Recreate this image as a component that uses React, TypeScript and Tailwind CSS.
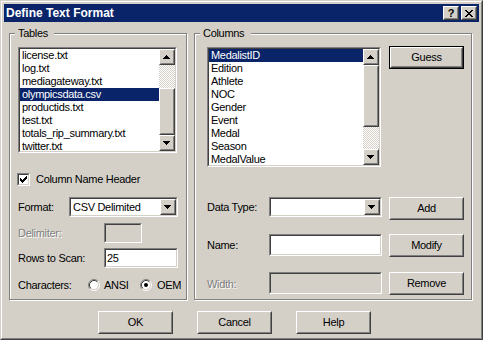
import React from "react";

type Kids = { className?: string; innerClass?: string; children?: React.ReactNode };

function Sunken({ className = "", innerClass = "", children }: Kids) {
  return (
    <div className={"border border-t-[#808080] border-l-[#808080] border-r-white border-b-white " + className}>
      <div className={"h-full w-full border border-t-[#404040] border-l-[#404040] border-r-[#d4d0c8] border-b-[#d4d0c8] " + innerClass}>
        {children}
      </div>
    </div>
  );
}

function Raised({ className = "", innerClass = "", children }: Kids) {
  return (
    <div className={"border border-t-white border-l-white border-r-[#404040] border-b-[#404040] bg-[#d4d0c8] " + className}>
      <div className={"h-full w-full border border-t-[#d4d0c8] border-l-[#d4d0c8] border-r-[#808080] border-b-[#808080] " + innerClass}>
        {children}
      </div>
    </div>
  );
}

function Pixels({ rows, color = "#000" }: { rows: string[]; color?: string }) {
  const w = rows[0].length;
  const h = rows.length;
  const rects: React.ReactNode[] = [];
  rows.forEach((r, y) =>
    r.split("").forEach((c, x) => {
      if (c === "x") rects.push(<rect key={x + "-" + y} x={x} y={y} width={1} height={1} fill={color} />);
    })
  );
  return (
    <svg width={w} height={h} viewBox={`0 0 ${w} ${h}`} shapeRendering="crispEdges">
      {rects}
    </svg>
  );
}

const DOWN = ["xxxxxxx", ".xxxxx.", "..xxx..", "...x..."];
const UP = ["...x...", "..xxx..", ".xxxxx.", "xxxxxxx"];
const CLOSE = ["xx....xx", ".xx..xx.", "..xxxx..", "...xx...", "..xxxx..", ".xx..xx.", "xx....xx"];
const CHECK = ["......x", ".....xx", "x...xxx", "xx.xxx.", "xxxxx..", ".xxx...", "..x...."];

function ArrowBtn({ dir }: { dir: "up" | "down" }) {
  return (
    <Raised className="w-[16px] h-[16px] shrink-0" innerClass="flex items-center justify-center pr-[1px]">
      <Pixels rows={dir === "up" ? UP : DOWN} />
    </Raised>
  );
}

function Track({ className = "" }: { className?: string }) {
  return (
    <div
      className={
        "w-full bg-[image:repeating-conic-gradient(#ffffff_0%_25%,#d4d0c8_0%_50%)] bg-[length:2px_2px] " + className
      }
    />
  );
}

function Button({ label, isDefault = false }: { label: string; isDefault?: boolean }) {
  if (isDefault)
    return (
      <div className="w-[75px] h-[23px] border border-black">
        <Raised className="h-full w-full" innerClass="flex items-center justify-center">
          {label}
        </Raised>
      </div>
    );
  return (
    <Raised className="w-[75px] h-[23px]" innerClass="flex items-center justify-center">
      {label}
    </Raised>
  );
}

function ListBox({
  items,
  selected,
  className,
  scroll,
}: {
  items: string[];
  selected: string;
  className: string;
  scroll: React.ReactNode;
}) {
  return (
    <Sunken className={className} innerClass="bg-white flex overflow-hidden">
      <div className="flex-1 overflow-hidden">
        {items.map((it) => (
          <div
            key={it}
            className={
              "h-[13px] leading-[13px] pl-[2px] whitespace-nowrap " +
              (it === selected ? "bg-[#0a246a] text-white" : "text-black")
            }
          >
            {it}
          </div>
        ))}
      </div>
      <div className="w-[16px] h-full flex flex-col">{scroll}</div>
    </Sunken>
  );
}

function Combo({ value, className }: { value: string; className: string }) {
  return (
    <Sunken className={className} innerClass="bg-white flex">
      <div className="flex-1 pl-[2px] flex items-center">{value}</div>
      <ArrowBtn dir="down" />
    </Sunken>
  );
}

function Radio({ checked }: { checked: boolean }) {
  return (
    <svg width="12" height="12" viewBox="0 0 12 12" className="shrink-0">
      <circle cx="6" cy="6" r="4.5" fill="#fff" />
      <path d="M2.11 9.89 A5.5 5.5 0 0 1 9.89 2.11" fill="none" stroke="#808080" strokeWidth="1" />
      <path d="M9.89 2.11 A5.5 5.5 0 0 1 2.11 9.89" fill="none" stroke="#ffffff" strokeWidth="1" />
      <path d="M2.82 9.18 A4.5 4.5 0 0 1 9.18 2.82" fill="none" stroke="#404040" strokeWidth="1" />
      <path d="M9.18 2.82 A4.5 4.5 0 0 1 2.82 9.18" fill="none" stroke="#d4d0c8" strokeWidth="1" />
      {checked && <circle cx="6" cy="6" r="2" fill="#000" />}
    </svg>
  );
}

const disabled = "text-[#808080] [text-shadow:1px_1px_0_#ffffff]";

export default function App() {
  const tables = [
    "license.txt",
    "log.txt",
    "mediagateway.txt",
    "olympicsdata.csv",
    "productids.txt",
    "test.txt",
    "totals_rip_summary.txt",
    "twitter.txt",
  ];
  const columns = ["MedalistID", "Edition", "Athlete", "NOC", "Gender", "Event", "Medal", "Season", "MedalValue"];

  return (
    <div className="w-[483px] h-[340px] bg-[#d4d0c8] border border-t-[#d4d0c8] border-l-[#d4d0c8] border-r-[#404040] border-b-[#404040] font-['Liberation_Sans',Arial,sans-serif] text-[11px] tracking-[-0.3px] text-black">
      <div className="h-full border border-t-white border-l-white border-r-[#808080] border-b-[#808080] p-[2px] flex flex-col">
        {/* Title bar */}
        <div className="h-[18px] shrink-0 bg-[#0a246a] flex items-center pl-[2px] pr-[2px]">
          <div className="flex-1 text-white font-bold text-[12px] tracking-normal leading-[18px]">Define Text Format</div>
          <div className="flex gap-[2px]">
            <Raised className="w-[16px] h-[14px]" innerClass="flex items-center justify-center">
              <span className="font-bold text-[11px] leading-none tracking-normal">?</span>
            </Raised>
            <Raised className="w-[16px] h-[14px]" innerClass="flex items-center justify-center pr-[1px]">
              <Pixels rows={CLOSE} />
            </Raised>
          </div>
        </div>

        {/* Groups */}
        <div className="flex gap-[7px] mt-[11px] ml-[5px]">
          {/* Tables */}
          <div className="relative w-[178px] h-[267px] border border-[#808080] shadow-[inset_1px_1px_0_#ffffff,1px_1px_0_#ffffff] pl-[8px] pt-[13px] flex flex-col">
            <div className="absolute top-[-7px] left-[5px] pl-[3px] pr-[6px] bg-[#d4d0c8] leading-[13px]">Tables</div>
            <ListBox
              items={tables}
              selected="olympicsdata.csv"
              className="w-[159px] h-[106px]"
              scroll={
                <>
                  <ArrowBtn dir="up" />
                  <Track className="h-[23px]" />
                  <Raised className="w-full h-[47px]" />
                  <div className="flex-1" />
                  <ArrowBtn dir="down" />
                </>
              }
            />
            <div className="mt-[20px] ml-[-1px] flex items-center gap-[6px] h-[13px]">
              <Sunken className="w-[13px] h-[13px]" innerClass="bg-white flex items-center justify-center">
                <Pixels rows={CHECK} />
              </Sunken>
              <span>Column Name Header</span>
            </div>
            <div className="mt-[11px] flex items-start">
              <div className="w-[51px] h-[20px] flex items-center">Format:</div>
              <Combo value="CSV Delimited" className="w-[109px] h-[20px]" />
            </div>
            <div className="mt-[6px] flex items-start">
              <div className={"w-[86px] h-[20px] flex items-center " + disabled}>Delimiter:</div>
              <Sunken className="w-[38px] h-[20px]" innerClass="bg-[#d4d0c8]" />
            </div>
            <div className="mt-[5px] flex items-start">
              <div className="w-[86px] h-[20px] flex items-center">Rows to Scan:</div>
              <Sunken className="w-[74px] h-[20px]" innerClass="bg-white flex items-center pl-[1px]">
                25
              </Sunken>
            </div>
            <div className="mt-[11px] flex items-center h-[12px]">
              <div className="w-[70px]">Characters:</div>
              <div className="w-[52px] flex items-center gap-[4px]">
                <Radio checked={false} />
                <span>ANSI</span>
              </div>
              <div className="flex items-center gap-[5px]">
                <Radio checked={true} />
                <span>OEM</span>
              </div>
            </div>
          </div>

          {/* Columns */}
          <div className="relative w-[278px] h-[267px] border border-[#808080] shadow-[inset_1px_1px_0_#ffffff,1px_1px_0_#ffffff] pl-[12px] pt-[13px] flex flex-col">
            <div className="absolute top-[-7px] left-[5px] pl-[3px] pr-[7px] bg-[#d4d0c8] leading-[13px]">Columns</div>
            <div className="flex items-start">
              <ListBox
                items={columns}
                selected="MedalistID"
                className="w-[174px] h-[120px]"
                scroll={
                  <>
                    <ArrowBtn dir="up" />
                    <Raised className="w-full h-[62px]" />
                    <Track className="flex-1" />
                    <ArrowBtn dir="down" />
                  </>
                }
              />
              <div className="ml-[8px] mt-[-1px]">
                <Button label="Guess" isDefault />
              </div>
            </div>
            <div className="mt-[30px] flex items-start">
              <div className="w-[62px] h-[20px] flex items-center">Data Type:</div>
              <Combo value="" className="w-[113px] h-[20px]" />
              <div className="ml-[7px]">
                <Button label="Add" />
              </div>
            </div>
            <div className="mt-[14px] flex items-start">
              <div className="w-[62px] h-[22px] pt-[1px] flex items-center">Name:</div>
              <Sunken className="w-[113px] h-[22px]" innerClass="bg-white" />
              <div className="ml-[7px]">
                <Button label="Modify" />
              </div>
            </div>
            <div className="mt-[15px] flex items-start">
              <div className={"w-[62px] h-[22px] pt-[3px] flex items-center " + disabled}>Width:</div>
              <Sunken className="w-[113px] h-[22px]" innerClass="bg-[#d4d0c8]" />
              <div className="ml-[7px]">
                <Button label="Remove" />
              </div>
            </div>
          </div>
        </div>

        {/* Bottom buttons */}
        <div className="mt-[11px] ml-[94px] flex gap-[24px]">
          <Button label="OK" />
          <Button label="Cancel" />
          <Button label="Help" />
        </div>
      </div>
    </div>
  );
}
